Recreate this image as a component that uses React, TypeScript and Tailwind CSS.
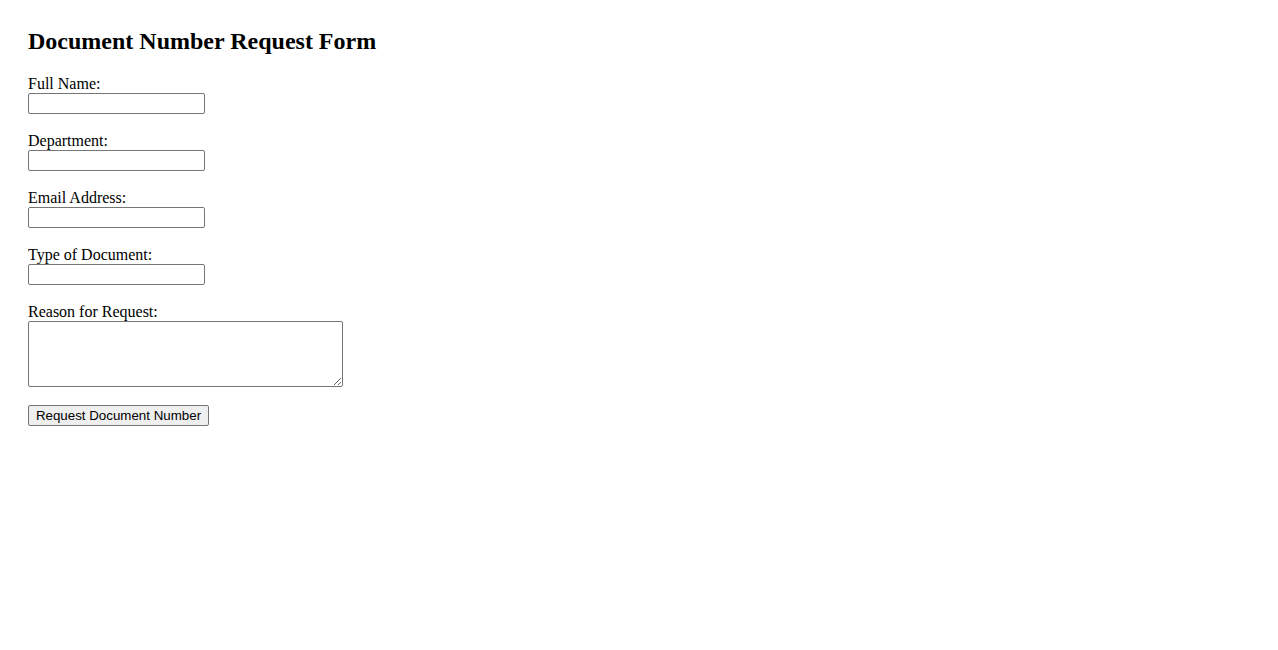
import React from "react";

const fields = ["Full Name:", "Department:", "Email Address:", "Type of Document:"];

export default function App() {
  return (
    <div className="min-h-[650px] bg-white text-black pl-[28px] pt-[27px] font-['Liberation_Serif',serif]">
      <h2 className="text-[24px] leading-[28px] font-bold mb-[20px]">Document Number Request Form</h2>
      <form className="flex flex-col items-start" onSubmit={(e) => e.preventDefault()}>
        {fields.map((f) => (
          <div key={f} className="flex flex-col items-start mb-[18px]">
            <label className="text-[16px] leading-[18px]">{f}</label>
            <input
              type="text"
              className="w-[177px] h-[21px] border border-[#767676] rounded-[2px] bg-white px-[2px] text-[13.33px] font-['Liberation_Sans',sans-serif]"
            />
          </div>
        ))}
        <div className="flex flex-col items-start mb-[18px]">
          <label className="text-[16px] leading-[18px]">Reason for Request:</label>
          <textarea className="block w-[315px] h-[66px] border border-[#767676] rounded-[2px] bg-white p-[2px] text-[13.33px] font-['Liberation_Mono',monospace] resize" />
        </div>
        <button
          type="submit"
          className="h-[21px] w-[181px] border border-[#767676] rounded-[2px] bg-[#efefef] text-[13.33px] leading-[19px] font-['Liberation_Sans',sans-serif] text-black"
        >
          Request Document Number
        </button>
      </form>
    </div>
  );
}
